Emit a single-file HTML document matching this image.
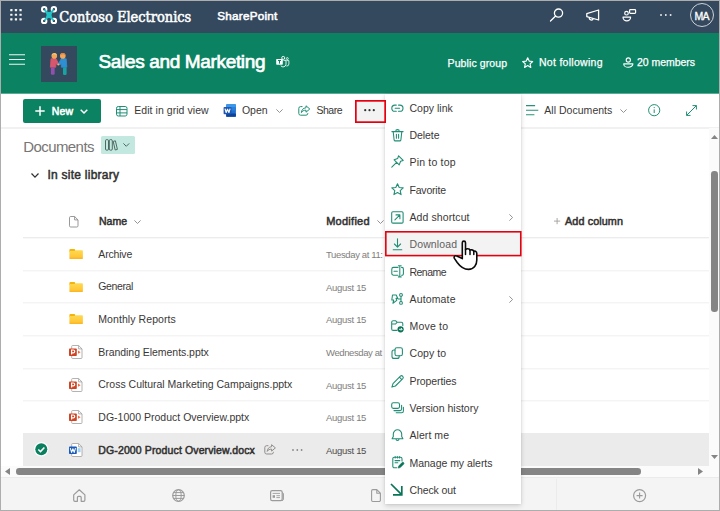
<!DOCTYPE html>
<html lang="en">
<head>
<meta charset="utf-8">
<title>Sales and Marketing - Documents</title>
<style>
*{box-sizing:border-box;margin:0;padding:0}
html,body{width:720px;height:511px;overflow:hidden;background:#fff}
body{font-family:"Liberation Sans",sans-serif;font-size:10.5px;color:#323130;position:relative}
.abs{position:absolute}
.t{position:absolute;white-space:nowrap}
svg{position:absolute;overflow:visible}
</style>
</head>
<body>
<div class="abs" style="left:0px;top:0px;width:720px;height:33px;background:#34495e"></div>
<div class="abs" style="left:0px;top:33px;width:720px;height:61px;background:linear-gradient(#0b8363,#0b8363 60px,#5aab96 60px,#5aab96 61px)"></div>
<div class="abs" style="left:0px;top:94px;width:720px;height:35px;background:#fff;border-bottom:2px solid #f1f1f1"></div>
<div class="abs" style="left:0px;top:477px;width:720px;height:34px;background:#f4f4f4;border-top:1px solid #ebebeb"></div>
<svg style="left:10.4px;top:9px;" width="12" height="12" viewBox="0 0 12 12" fill="none"><rect x="0.2" y="0.1" width="2.3" height="2.2" rx="0.4" fill="#f2f4f6"/><rect x="0.2" y="4.65" width="2.3" height="2.2" rx="0.4" fill="#f2f4f6"/><rect x="0.2" y="9.2" width="2.3" height="2.2" rx="0.4" fill="#f2f4f6"/><rect x="4.8" y="0.1" width="2.3" height="2.2" rx="0.4" fill="#f2f4f6"/><rect x="4.8" y="4.65" width="2.3" height="2.2" rx="0.4" fill="#f2f4f6"/><rect x="4.8" y="9.2" width="2.3" height="2.2" rx="0.4" fill="#f2f4f6"/><rect x="9.4" y="0.1" width="2.3" height="2.2" rx="0.4" fill="#f2f4f6"/><rect x="9.4" y="4.65" width="2.3" height="2.2" rx="0.4" fill="#f2f4f6"/><rect x="9.4" y="9.2" width="2.3" height="2.2" rx="0.4" fill="#f2f4f6"/></svg>
<svg style="left:40.8px;top:6.3px;" width="16" height="18" viewBox="0 0 16 18" fill="none"><g stroke="#fff" stroke-width="2" fill="none"><circle cx="3.2" cy="3.2" r="2.2"/><circle cx="12.9" cy="3.2" r="2.2"/><circle cx="3.2" cy="14.9" r="2.2"/><circle cx="12.9" cy="14.9" r="2.2"/></g>
<path d="M4.1 4.3 L12 13.8 M12 4.3 L4.1 13.8" stroke="#22c3c6" stroke-width="2" stroke-linecap="round"/><path d="M4.7 5 Q8.05 7 11.4 5 Q9.7 9.05 11.4 13.1 Q8.05 11.1 4.7 13.1 Q6.4 9.05 4.7 5 Z" fill="#22c3c6"/></svg>
<span class="t" style="left:59.20px;top:6.98px;font-size:14.5px;line-height:20px;color:#fff;font-family:'DejaVu Serif Condensed','DejaVu Serif','Liberation Serif',serif;font-stretch:condensed;-webkit-text-stroke:0.5px #fff;letter-spacing:-0.03px;">Contoso Electronics</span>
<span class="t" style="left:217.30px;top:8.35px;font-size:11.7px;line-height:16px;letter-spacing:0.234px;color:#fff;-webkit-text-stroke:0.55px #fff;">SharePoint</span>
<svg style="left:549px;top:7px;" width="16" height="16" viewBox="0 0 16 16" fill="none"><circle cx="9.5" cy="6.1" r="4.1" stroke="#fff" stroke-width="1.3"/><path d="M6.6 9 L1.5 14" stroke="#fff" stroke-width="1.3" stroke-linecap="round"/></svg>
<svg style="left:586px;top:9px;" width="14" height="12" viewBox="0 0 14 12" fill="none"><path d="M12.6 1 V11 L0.8 7.6 V4.6 Z" stroke="#fff" stroke-width="1.3" stroke-linejoin="round"/><path d="M3.4 8.4 a2 2 0 0 0 3.9 1.1" stroke="#fff" stroke-width="1.2"/></svg>
<svg style="left:621px;top:8px;" width="16" height="16" viewBox="0 0 16 16" fill="none"><circle cx="5.5" cy="5.2" r="1.8" stroke="#fff" stroke-width="1.2"/><rect x="8.6" y="1.7" width="6" height="3.7" rx="0.8" stroke="#fff" stroke-width="1.2"/><path d="M2 9.1 h7.6 a3.8 3.8 0 0 1 -7.6 0 Z" stroke="#fff" stroke-width="1.2" stroke-linejoin="round"/></svg>
<svg style="left:659.6px;top:14px;" width="12" height="2" viewBox="0 0 12 2" fill="none"><rect x="0.2" y="0.2" width="1.6" height="1.6" fill="#fff"/><rect x="5" y="0.2" width="1.6" height="1.6" fill="#fff"/><rect x="9.8" y="0.2" width="1.6" height="1.6" fill="#fff"/></svg>
<div class="abs" style="left:689.7px;top:3px;width:24.4px;height:24.4px;border:1.2px solid #ccd3d9;border-radius:50%"></div>
<span class="t" style="left:694.60px;top:8.86px;font-size:10.5px;line-height:15px;letter-spacing:-0.751px;color:#fff;-webkit-text-stroke:0.3px #fff;">MA</span>
<svg style="left:9px;top:54px;" width="16" height="11" viewBox="0 0 16 11" fill="none"><path d="M0 0.7 H16 M0 5.5 H16 M0 10.3 H16" stroke="#eef6f3" stroke-width="1.05"/></svg>
<div class="abs" style="left:41px;top:46px;width:36px;height:36px;background:#34495e"></div>
<svg style="left:41px;top:46px;" width="36" height="36" viewBox="0 0 36 36" fill="none"><path d="M10 12.8 h5 l2.6 4.8 -1.2 1.4 -1.6 -1.6 v3.8 h-5.4 Z" fill="#d9566f" stroke="#d9566f" stroke-width="0.8" stroke-linejoin="round"/>
<path d="M25.2 12.8 h-5 l-2.6 4.8 1.2 1.4 1.6 -1.6 v3.8 h5.4 Z" fill="#2f8fd3" stroke="#2f8fd3" stroke-width="0.8" stroke-linejoin="round"/>
<circle cx="17.4" cy="18.6" r="1" fill="#f4b06a"/>
<rect x="9.9" y="21.2" width="3.8" height="7.6" rx="1.2" fill="#9050ab"/>
<rect x="22" y="21.2" width="3.6" height="7.8" rx="1.2" fill="#18a5a2"/>
<circle cx="13.3" cy="9.9" r="2.8" fill="#f3a65a"/><circle cx="21.8" cy="9.9" r="2.8" fill="#f3a65a"/>
<path d="M10.6 9.4 a2.8 2.8 0 0 1 5.2 -0.8 q-2.4 0.2 -3.2 -0.8 q-0.6 1.2 -2 1.6 Z" fill="#f6cf6e"/>
<path d="M19.1 9 a2.8 2.8 0 0 1 5.4 0.2 q-1.6 -0.2 -2.4 -1.2 q-1.4 1 -3 1 Z" fill="#e8833a"/></svg>
<span class="t" style="left:98.50px;top:47.92px;font-size:19px;line-height:27px;letter-spacing:-0.345px;color:#fff;-webkit-text-stroke:0.7px #fff;">Sales and Marketing</span>
<svg style="left:276px;top:55.5px;" width="14" height="12" viewBox="0 0 14 12" fill="none"><rect x="0.2" y="2.9" width="6.6" height="5.8" rx="0.6" fill="#fff"/><path d="M2 4.5 H5 M3.5 4.5 V7.6" stroke="#0b8363" stroke-width="1"/><circle cx="7.2" cy="1.9" r="1.5" stroke="#fff" stroke-width="0.9"/><circle cx="11.3" cy="2.6" r="1" stroke="#fff" stroke-width="0.8"/><path d="M7.4 4.3 H10 V8.4 a2.9 2.9 0 0 1 -5.2 1.3" stroke="#fff" stroke-width="0.9"/><path d="M10.4 4.6 H12.9 V8 a2.2 2.2 0 0 1 -2.6 2" stroke="#fff" stroke-width="0.8"/></svg>
<span class="t" style="left:447.60px;top:55.86px;font-size:10.5px;line-height:15px;letter-spacing:0.093px;color:#fff;-webkit-text-stroke:0.25px #fff;">Public group</span>
<svg style="left:522px;top:56.6px;" width="11.4" height="11.2" viewBox="0 0 11.4 11.2" fill="none"><path d="M5.7 0.8 L7.2 4.1 L10.7 4.5 L8.1 6.9 L8.8 10.4 L5.7 8.6 L2.6 10.4 L3.3 6.9 L0.7 4.5 L4.2 4.1 Z" stroke="#fff" stroke-width="1.15" stroke-linejoin="round"/></svg>
<span class="t" style="left:539.00px;top:55.46px;font-size:10.5px;line-height:15px;letter-spacing:0.282px;color:#fff;-webkit-text-stroke:0.25px #fff;">Not following</span>
<svg style="left:622.5px;top:57px;" width="11" height="11" viewBox="0 0 11 11" fill="none"><circle cx="5.3" cy="3" r="2.1" stroke="#fff" stroke-width="1.1"/><path d="M0.7 6.9 h9.2 a4.6 3.4 0 0 1 -9.2 0 Z" stroke="#fff" stroke-width="1.1" stroke-linejoin="round"/></svg>
<span class="t" style="left:637.00px;top:54.86px;font-size:10.5px;line-height:15px;letter-spacing:-0.040px;color:#fff;-webkit-text-stroke:0.25px #fff;">20 members</span>
<div class="abs" style="left:23px;top:99px;width:78px;height:23.6px;background:#0b8363;border-radius:2px"></div>
<svg style="left:35px;top:106px;" width="10" height="10" viewBox="0 0 10 10" fill="none"><path d="M5 0.3 V9.7 M0.3 5 H9.7" stroke="#fff" stroke-width="1.5"/></svg>
<span class="t" style="left:51.70px;top:103.66px;font-size:10.5px;line-height:15px;letter-spacing:0.247px;color:#fff;-webkit-text-stroke:0.55px #fff;">New</span>
<svg style="left:80px;top:109px;" width="8" height="5" viewBox="0 0 8 5" fill="none"><path d="M0.7 0.7 L4 4 L7.3 0.7" stroke="#fff" stroke-width="1.5"/></svg>
<svg style="left:116.2px;top:105.5px;" width="11.5" height="10.5" viewBox="0 0 11.5 10.5" fill="none"><rect x="0.5" y="0.5" width="10.5" height="9.5" rx="1.8" stroke="#208d74" stroke-width="1"/><path d="M0.5 3.6 H11 M0.5 6.9 H11 M4 0.5 V10" stroke="#208d74" stroke-width="1"/></svg>
<span class="t" style="left:134.20px;top:103.46px;font-size:10.5px;line-height:15px;letter-spacing:0.060px;color:#3a3837;">Edit in grid view</span>
<svg style="left:223px;top:104px;" width="13.5" height="13" viewBox="0 0 13.5 13" fill="none"><rect x="3.2" y="0.2" width="9.7" height="12.6" rx="0.8" fill="#1f6fcc"/><rect x="3.2" y="0.2" width="9.7" height="3.4" rx="0.6" fill="#3a97ea"/><rect x="3.2" y="3.4" width="9.7" height="3.2" fill="#2a7fda"/><rect x="3.2" y="9.4" width="9.7" height="3.4" rx="0.6" fill="#0f429a"/><rect x="0.6" y="3" width="7.9" height="7.2" rx="0.8" fill="#1d57b7"/><path d="M2 4.7 L3.2 8.5 L4.55 5.2 L5.9 8.5 L7.1 4.7" stroke="#fff" stroke-width="1.15" stroke-linejoin="round"/></svg>
<span class="t" style="left:242.00px;top:103.46px;font-size:10.5px;line-height:15px;letter-spacing:-0.062px;color:#3a3837;">Open</span>
<svg style="left:275.5px;top:109px;" width="7" height="4" viewBox="0 0 7 4" fill="none"><path d="M0.4 0.4 L3.5 3.5 L6.6 0.4" stroke="#8a8886" stroke-width="0.9"/></svg>
<svg style="left:298.2px;top:104.8px;" width="12.6" height="11" viewBox="0 0 12.6 11" fill="none"><path d="M4.5 1.6 H2.6 a1.8 1.8 0 0 0 -1.8 1.8 V8.4 a1.8 1.8 0 0 0 1.8 1.8 H8 a1.8 1.8 0 0 0 1.8 -1.8 V8" stroke="#208d74" stroke-width="1" /><path d="M8 0.8 L11.8 4 L8 7.2 V5.2 C5.6 5.2 4.3 6 3.4 7.6 C3.6 5 5 3 8 2.8 Z" stroke="#208d74" stroke-width="1" stroke-linejoin="round"/></svg>
<span class="t" style="left:316.50px;top:103.46px;font-size:10.5px;line-height:15px;letter-spacing:-0.505px;color:#3a3837;">Share</span>
<svg style="left:526px;top:105px;" width="12.5" height="10.5" viewBox="0 0 12.5 10.5" fill="none"><path d="M0 0.6 H9.1 M0 5.3 H12.3 M0 9.7 H8.4" stroke="#2a9078" stroke-width="1.1"/></svg>
<span class="t" style="left:544.30px;top:103.46px;font-size:10.5px;line-height:15px;letter-spacing:0.026px;color:#3a3837;">All Documents</span>
<svg style="left:620px;top:109px;" width="7" height="4" viewBox="0 0 7 4" fill="none"><path d="M0.4 0.4 L3.5 3.5 L6.6 0.4" stroke="#8a8886" stroke-width="0.9"/></svg>
<svg style="left:648.2px;top:103.9px;" width="12.4" height="12.4" viewBox="0 0 12.4 12.4" fill="none"><circle cx="6.2" cy="6.2" r="5.6" stroke="#208d74" stroke-width="1"/><path d="M6.2 5.4 V9" stroke="#208d74" stroke-width="1"/><circle cx="6.2" cy="3.6" r="0.6" fill="#208d74"/></svg>
<svg style="left:686px;top:105px;" width="11" height="11" viewBox="0 0 11 11" fill="none"><path d="M6.5 0.6 H10.4 V4.5 M10.4 0.6 L0.6 10.4 M0.6 6.5 V10.4 H4.5" stroke="#208d74" stroke-width="1"/></svg>
<span class="t" style="left:23.20px;top:136.30px;font-size:15px;line-height:21px;letter-spacing:-0.571px;color:#787674;">Documents</span>
<div class="abs" style="left:101px;top:136px;width:33.6px;height:17.7px;background:#c3e8df;border-radius:1.5px"></div>
<svg style="left:104.8px;top:138.8px;" width="13" height="12" viewBox="0 0 13 12" fill="none"><g stroke="#4d6a62" stroke-width="1"><rect x="0.5" y="0.6" width="3" height="10.6" rx="1.2"/><rect x="4.3" y="0.6" width="3" height="10.6" rx="1.2"/><path d="M8.2 2.4 L10.4 1.8 L12.4 10.4 L10.2 11 Z" stroke-linejoin="round"/></g></svg>
<svg style="left:122.6px;top:143px;" width="6.6" height="3.8" viewBox="0 0 6.6 3.8" fill="none"><path d="M0.4 0.4 L3.3 3.3 L6.2 0.4" stroke="#4d6a62" stroke-width="1"/></svg>
<svg style="left:31px;top:173px;" width="8" height="4.8" viewBox="0 0 8 4.8" fill="none"><path d="M0.5 0.5 L4 4.1 L7.5 0.5" stroke="#323130" stroke-width="1.25"/></svg>
<span class="t" style="left:47.50px;top:166.64px;font-size:12px;line-height:17px;letter-spacing:0.248px;color:#323130;-webkit-text-stroke:0.5px #323130;">In site library</span>
<svg style="left:68.5px;top:216px;" width="9.5" height="11.5" viewBox="0 0 9.5 11.5" fill="none"><path d="M1.7 0.5 H5.6 L9 3.9 V9.8 a1.2 1.2 0 0 1 -1.2 1.2 H1.7 A1.2 1.2 0 0 1 0.5 9.8 V1.7 A1.2 1.2 0 0 1 1.7 0.5 Z M5.6 0.5 V3.9 H9" stroke="#8f8d8b" stroke-width="0.9" stroke-linejoin="round"/></svg>
<span class="t" style="left:99.00px;top:214.26px;font-size:10.5px;line-height:15px;letter-spacing:-0.003px;color:#323130;-webkit-text-stroke:0.5px #323130;">Name</span>
<svg style="left:134.4px;top:219.8px;" width="7" height="4" viewBox="0 0 7 4" fill="none"><path d="M0.4 0.4 L3.5 3.5 L6.6 0.4" stroke="#8a8886" stroke-width="0.9"/></svg>
<span class="t" style="left:326.20px;top:214.09px;font-size:11px;line-height:15px;letter-spacing:0.260px;color:#323130;-webkit-text-stroke:0.5px #323130;">Modified</span>
<svg style="left:377px;top:219.5px;" width="7" height="4" viewBox="0 0 7 4" fill="none"><path d="M0.4 0.4 L3.5 3.5 L6.6 0.4" stroke="#8a8886" stroke-width="0.9"/></svg>
<svg style="left:553.7px;top:218.3px;" width="6.2" height="6.2" viewBox="0 0 6.2 6.2" fill="none"><path d="M3.1 0 V6.2 M0 3.1 H6.2" stroke="#a19f9d" stroke-width="0.9"/></svg>
<span class="t" style="left:565.00px;top:214.16px;font-size:10.8px;line-height:15px;letter-spacing:0.107px;color:#323130;-webkit-text-stroke:0.5px #323130;">Add column</span>
<div class="abs" style="left:23px;top:237px;width:685.6px;height:2px;background:linear-gradient(#ececec 50%,#f8f8f8 50%)"></div>
<div class="abs" style="left:23px;top:433px;width:685.6px;height:32.6px;background:#ebebeb"></div>
<div class="abs" style="left:23px;top:270px;width:685.6px;height:2px;background:linear-gradient(#f4f4f4 50%,#fafafa 50%)"></div>
<svg style="left:68.6px;top:248.9px;" width="14.2" height="10.2" viewBox="0 0 14.2 10.2" fill="none"><defs><linearGradient id="fg" x1="0" y1="0" x2="0" y2="1"><stop offset="0" stop-color="#ffd94f"/><stop offset="0.7" stop-color="#ffc83a"/><stop offset="1" stop-color="#fdb21c"/></linearGradient></defs><path d="M0.4 1.1 a1 1 0 0 1 1 -1 H5.2 a1 1 0 0 1 1 1 V3 H0.4 Z" fill="#f3b50c"/><path d="M0.4 1.9 H5.6 L6.4 1.3 H13 a0.9 0.9 0 0 1 0.9 0.9 V9.2 a0.9 0.9 0 0 1 -0.9 0.9 H1.3 a0.9 0.9 0 0 1 -0.9 -0.9 Z" fill="url(#fg)"/></svg>
<span class="t" style="left:98.30px;top:246.56px;font-size:10.5px;line-height:15px;letter-spacing:-0.169px;color:#3a3837;">Archive</span>
<span class="t" style="left:326.00px;top:248.01px;font-size:9.5px;line-height:13px;letter-spacing:-0.368px;color:#807e7c;">Tuesday at 11:</span>
<div class="abs" style="left:23px;top:302px;width:685.6px;height:2px;background:linear-gradient(#f4f4f4 50%,#fafafa 50%)"></div>
<svg style="left:68.6px;top:281.5px;" width="14.2" height="10.2" viewBox="0 0 14.2 10.2" fill="none"><defs><linearGradient id="fg" x1="0" y1="0" x2="0" y2="1"><stop offset="0" stop-color="#ffd94f"/><stop offset="0.7" stop-color="#ffc83a"/><stop offset="1" stop-color="#fdb21c"/></linearGradient></defs><path d="M0.4 1.1 a1 1 0 0 1 1 -1 H5.2 a1 1 0 0 1 1 1 V3 H0.4 Z" fill="#f3b50c"/><path d="M0.4 1.9 H5.6 L6.4 1.3 H13 a0.9 0.9 0 0 1 0.9 0.9 V9.2 a0.9 0.9 0 0 1 -0.9 0.9 H1.3 a0.9 0.9 0 0 1 -0.9 -0.9 Z" fill="url(#fg)"/></svg>
<span class="t" style="left:98.30px;top:279.16px;font-size:10.5px;line-height:15px;letter-spacing:-0.393px;color:#3a3837;">General</span>
<span class="t" style="left:326.00px;top:280.61px;font-size:9.5px;line-height:13px;letter-spacing:-0.298px;color:#807e7c;">August 15</span>
<div class="abs" style="left:23px;top:335px;width:685.6px;height:2px;background:linear-gradient(#f4f4f4 50%,#fafafa 50%)"></div>
<svg style="left:68.6px;top:314.2px;" width="14.2" height="10.2" viewBox="0 0 14.2 10.2" fill="none"><defs><linearGradient id="fg" x1="0" y1="0" x2="0" y2="1"><stop offset="0" stop-color="#ffd94f"/><stop offset="0.7" stop-color="#ffc83a"/><stop offset="1" stop-color="#fdb21c"/></linearGradient></defs><path d="M0.4 1.1 a1 1 0 0 1 1 -1 H5.2 a1 1 0 0 1 1 1 V3 H0.4 Z" fill="#f3b50c"/><path d="M0.4 1.9 H5.6 L6.4 1.3 H13 a0.9 0.9 0 0 1 0.9 0.9 V9.2 a0.9 0.9 0 0 1 -0.9 0.9 H1.3 a0.9 0.9 0 0 1 -0.9 -0.9 Z" fill="url(#fg)"/></svg>
<span class="t" style="left:98.30px;top:311.86px;font-size:10.5px;line-height:15px;letter-spacing:0.075px;color:#3a3837;">Monthly Reports</span>
<span class="t" style="left:326.00px;top:313.31px;font-size:9.5px;line-height:13px;letter-spacing:-0.298px;color:#807e7c;">August 15</span>
<div class="abs" style="left:23px;top:368px;width:685.6px;height:2px;background:linear-gradient(#f4f4f4 50%,#fafafa 50%)"></div>
<svg style="left:68.5px;top:344.8px;" width="14" height="14" viewBox="0 0 14 14" fill="none"><path d="M3.6 0.5 H9.6 L13 3.9 V12.6 a0.9 0.9 0 0 1 -0.9 0.9 H3.6 a0.9 0.9 0 0 1 -0.9 -0.9 V1.4 a0.9 0.9 0 0 1 0.9 -0.9 Z" fill="#fff" stroke="#a19f9d" stroke-width="0.8"/><path d="M9.6 0.5 V3.9 H13" stroke="#a19f9d" stroke-width="0.8" fill="none"/><rect x="0" y="3.4" width="7.8" height="7.6" rx="0.8" fill="#d04423"/><path d="M2.6 9.6 V5 H4.3 a1.4 1.4 0 0 1 0 2.8 H2.6" stroke="#fff" stroke-width="1.2" fill="none"/><path d="M9 5.6 L11.6 7.2 L9 8.8 Z" fill="#ed6c47"/></svg>
<span class="t" style="left:98.30px;top:344.56px;font-size:10.5px;line-height:15px;letter-spacing:-0.047px;color:#3a3837;">Branding Elements.pptx</span>
<span class="t" style="left:326.00px;top:346.01px;font-size:9.5px;line-height:13px;letter-spacing:-0.396px;color:#807e7c;">Wednesday at</span>
<div class="abs" style="left:23px;top:400px;width:685.6px;height:2px;background:linear-gradient(#f4f4f4 50%,#fafafa 50%)"></div>
<svg style="left:68.5px;top:377.5px;" width="14" height="14" viewBox="0 0 14 14" fill="none"><path d="M3.6 0.5 H9.6 L13 3.9 V12.6 a0.9 0.9 0 0 1 -0.9 0.9 H3.6 a0.9 0.9 0 0 1 -0.9 -0.9 V1.4 a0.9 0.9 0 0 1 0.9 -0.9 Z" fill="#fff" stroke="#a19f9d" stroke-width="0.8"/><path d="M9.6 0.5 V3.9 H13" stroke="#a19f9d" stroke-width="0.8" fill="none"/><rect x="0" y="3.4" width="7.8" height="7.6" rx="0.8" fill="#d04423"/><path d="M2.6 9.6 V5 H4.3 a1.4 1.4 0 0 1 0 2.8 H2.6" stroke="#fff" stroke-width="1.2" fill="none"/><path d="M9 5.6 L11.6 7.2 L9 8.8 Z" fill="#ed6c47"/></svg>
<span class="t" style="left:98.30px;top:377.26px;font-size:10.5px;line-height:15px;letter-spacing:-0.009px;color:#3a3837;">Cross Cultural Marketing Campaigns.pptx</span>
<span class="t" style="left:326.00px;top:378.71px;font-size:9.5px;line-height:13px;letter-spacing:-0.298px;color:#807e7c;">August 15</span>
<svg style="left:68.5px;top:410.2px;" width="14" height="14" viewBox="0 0 14 14" fill="none"><path d="M3.6 0.5 H9.6 L13 3.9 V12.6 a0.9 0.9 0 0 1 -0.9 0.9 H3.6 a0.9 0.9 0 0 1 -0.9 -0.9 V1.4 a0.9 0.9 0 0 1 0.9 -0.9 Z" fill="#fff" stroke="#a19f9d" stroke-width="0.8"/><path d="M9.6 0.5 V3.9 H13" stroke="#a19f9d" stroke-width="0.8" fill="none"/><rect x="0" y="3.4" width="7.8" height="7.6" rx="0.8" fill="#d04423"/><path d="M2.6 9.6 V5 H4.3 a1.4 1.4 0 0 1 0 2.8 H2.6" stroke="#fff" stroke-width="1.2" fill="none"/><path d="M9 5.6 L11.6 7.2 L9 8.8 Z" fill="#ed6c47"/></svg>
<span class="t" style="left:98.30px;top:409.96px;font-size:10.5px;line-height:15px;letter-spacing:0.015px;color:#3a3837;">DG-1000 Product Overview.pptx</span>
<span class="t" style="left:326.00px;top:411.41px;font-size:9.5px;line-height:13px;letter-spacing:-0.298px;color:#807e7c;">August 15</span>
<svg style="left:68.5px;top:442.8px;" width="14" height="14" viewBox="0 0 14 14" fill="none"><path d="M3.6 0.5 H9.6 L13 3.9 V12.6 a0.9 0.9 0 0 1 -0.9 0.9 H3.6 a0.9 0.9 0 0 1 -0.9 -0.9 V1.4 a0.9 0.9 0 0 1 0.9 -0.9 Z" fill="#fff" stroke="#a19f9d" stroke-width="0.8"/><path d="M9.6 0.5 V3.9 H13" stroke="#a19f9d" stroke-width="0.8" fill="none"/><rect x="0" y="3.4" width="7.8" height="7.6" rx="0.8" fill="#185abd"/><path d="M1.3 5.2 L2.6 9.4 L3.9 5.8 L5.2 9.4 L6.5 5.2" stroke="#fff" stroke-width="1.1" fill="none" stroke-linejoin="round"/><rect x="8.8" y="5.2" width="2.8" height="4" fill="#9fd0f5"/></svg>
<span class="t" style="left:98.30px;top:442.56px;font-size:10.5px;line-height:15px;letter-spacing:0.128px;color:#323130;-webkit-text-stroke:0.5px #323130;">DG-2000 Product Overview.docx</span>
<span class="t" style="left:326.00px;top:444.01px;font-size:9.5px;line-height:13px;letter-spacing:-0.298px;color:#4e4c4a;">August 15</span>
<svg style="left:33.8px;top:442.1px;" width="14.6" height="14.6" viewBox="0 0 14.6 14.6" fill="none"><circle cx="7.3" cy="7.3" r="7.2" fill="#fff"/><circle cx="7.3" cy="7.3" r="6" fill="#0b8060"/><path d="M4.3 7.5 L6.5 9.6 L10.4 5.4" stroke="#fff" stroke-width="1.5" fill="none"/></svg>
<svg style="left:264px;top:444.2px;" width="12" height="10.6" viewBox="0 0 12 10.6" fill="none"><path d="M4.4 1.7 H2.6 a1.8 1.8 0 0 0 -1.8 1.8 V8.2 a1.8 1.8 0 0 0 1.8 1.8 H7.6 a1.8 1.8 0 0 0 1.8 -1.8 V7.8" stroke="#8f8d8b" stroke-width="1" /><path d="M7.6 0.7 L11.4 3.9 L7.6 7.1 V5.1 C5.4 5.1 4.1 5.9 3.2 7.4 C3.4 4.9 4.8 2.9 7.6 2.7 Z" stroke="#8f8d8b" stroke-width="1" stroke-linejoin="round"/></svg>
<svg style="left:292px;top:448.7px;" width="11" height="2" viewBox="0 0 11 2" fill="none"><circle cx="1" cy="1" r="0.9" fill="#8a8886"/><circle cx="5.3" cy="1" r="0.9" fill="#8a8886"/><circle cx="9.6" cy="1" r="0.9" fill="#8a8886"/></svg>
<div class="abs" style="left:708.6px;top:128px;width:11.4px;height:338px;background:#fbfbfb"></div>
<svg style="left:711px;top:135px;" width="7" height="4" viewBox="0 0 7 4" fill="none"><path d="M3.5 0 L7 4 H0 Z" fill="#858585"/></svg>
<svg style="left:711px;top:454.8px;" width="7" height="4" viewBox="0 0 7 4" fill="none"><path d="M3.5 4 L7 0 H0 Z" fill="#858585"/></svg>
<div class="abs" style="left:711.2px;top:171.2px;width:6.4px;height:140.5px;background:#858585;border-radius:3.2px"></div>
<div class="abs" style="left:0px;top:465.6px;width:720px;height:11.6px;background:#fbfbfb"></div>
<svg style="left:4.6px;top:468px;" width="5" height="7" viewBox="0 0 5 7" fill="none"><path d="M0 3.5 L5 0 V7 Z" fill="#858585"/></svg>
<svg style="left:697.5px;top:468px;" width="5" height="7" viewBox="0 0 5 7" fill="none"><path d="M5 3.5 L0 0 V7 Z" fill="#858585"/></svg>
<div class="abs" style="left:16px;top:468px;width:625px;height:6.5px;background:#858585;border-radius:3.25px"></div>
<svg style="left:73.3px;top:488.9px;" width="12.6" height="13" viewBox="0 0 12.6 13" fill="none"><path d="M0.7 5.9 L6.3 0.8 L11.9 5.9 V11 a1.3 1.3 0 0 1 -1.3 1.3 H8.2 V8.4 a1 1 0 0 0 -1 -1 H5.4 a1 1 0 0 0 -1 1 V12.3 H2 a1.3 1.3 0 0 1 -1.3 -1.3 Z" stroke="#9b9b9b" stroke-width="1.2" stroke-linejoin="round"/></svg>
<svg style="left:171.8px;top:488.9px;" width="13" height="13" viewBox="0 0 13 13" fill="none"><circle cx="6.5" cy="6.5" r="5.8" stroke="#9b9b9b" stroke-width="1.2"/><ellipse cx="6.5" cy="6.5" rx="2.7" ry="5.8" stroke="#9b9b9b" stroke-width="1"/><path d="M0.7 6.5 H12.3 M1.5 3.6 H11.5 M1.5 9.4 H11.5" stroke="#9b9b9b" stroke-width="1"/></svg>
<svg style="left:270.3px;top:489.8px;" width="14" height="11.4" viewBox="0 0 14 11.4" fill="none"><rect x="0.6" y="0.6" width="11.6" height="10" rx="1.6" stroke="#9b9b9b" stroke-width="1.2"/><path d="M12.2 2.8 H12.4 a1 1 0 0 1 1 1 V9 a1.6 1.6 0 0 1 -1.6 1.6" stroke="#9b9b9b" stroke-width="1"/><rect x="2.6" y="5.2" width="2.4" height="2.6" fill="#9b9b9b"/><path d="M2.6 3.4 H10 M6.4 5.7 H10 M6.4 7.6 H10" stroke="#9b9b9b" stroke-width="0.9"/></svg>
<svg style="left:370.9px;top:489.2px;" width="10" height="13.2" viewBox="0 0 10 13.2" fill="none"><path d="M1.8 0.6 H5.8 L9.4 4.2 V11.2 a1.3 1.3 0 0 1 -1.3 1.3 H1.8 A1.3 1.3 0 0 1 0.6 11.2 V1.9 A1.3 1.3 0 0 1 1.8 0.6 Z M5.8 0.6 V4.2 H9.4" stroke="#9b9b9b" stroke-width="1.1" stroke-linejoin="round"/></svg>
<div class="abs" style="left:556px;top:479px;width:1px;height:31px;background:#ebebeb"></div>
<svg style="left:632.6px;top:488.7px;" width="13.2" height="13.2" viewBox="0 0 13.2 13.2" fill="none"><circle cx="6.6" cy="6.6" r="6" stroke="#9b9b9b" stroke-width="1.2"/><path d="M6.6 3.6 V9.6 M3.6 6.6 H9.6" stroke="#9b9b9b" stroke-width="1.1"/></svg>
<div class="abs" style="left:385.4px;top:93.5px;width:136px;height:410.5px;background:#fff;box-shadow:0 2px 5px rgba(0,0,0,0.16),0 0 2px rgba(0,0,0,0.10)"></div>
<svg style="left:385.2px;top:230.7px;" width="136.6" height="25.4" viewBox="0 0 136.6 25.4" fill="none"><rect x="0.8" y="0.8" width="135" height="23.8" fill="#f3f3f3" stroke="#e6000f" stroke-width="1.6"/></svg>
<svg style="left:391px;top:101.5px;" width="13" height="13" viewBox="0 0 13 13" fill="none"><path d="M5.3 3.1 H3.9 a3.1 3.1 0 0 0 0 6.2 H5.3 M7.5 3.1 H8.9 a3.1 3.1 0 0 1 0 6.2 H7.5 M4.2 6.2 H8.6" stroke="#208d74" stroke-width="1.08" stroke-linejoin="round" stroke-linecap="round"/></svg>
<span class="t" style="left:409.50px;top:100.76px;font-size:10.5px;line-height:15px;letter-spacing:0.014px;color:#3a3837;">Copy link</span>
<svg style="left:391px;top:129px;" width="13" height="13" viewBox="0 0 13 13" fill="none"><path d="M0.9 2.6 H12.1 M4.7 2.4 a1.8 1.8 0 0 1 3.6 0 M2.2 2.8 L3.1 10.8 a1.3 1.3 0 0 0 1.3 1.1 H8.6 a1.3 1.3 0 0 0 1.3 -1.1 L10.8 2.8 M5.4 5.2 V9.2 M7.6 5.2 V9.2" stroke="#208d74" stroke-width="1.08" stroke-linejoin="round" stroke-linecap="round"/></svg>
<span class="t" style="left:409.50px;top:128.06px;font-size:10.5px;line-height:15px;letter-spacing:-0.070px;color:#3a3837;">Delete</span>
<svg style="left:390.8px;top:155.4px;" width="13" height="13" viewBox="0 0 13 13" fill="none"><path d="M7.6 0.8 L12.2 5.4 L9.6 6.3 L8.2 9.9 L3.1 4.8 L6.7 3.4 Z M5.6 7.4 L0.8 12.2" stroke="#208d74" stroke-width="1.08" stroke-linejoin="round" stroke-linecap="round"/></svg>
<span class="t" style="left:409.50px;top:155.36px;font-size:10.5px;line-height:15px;letter-spacing:0.182px;color:#3a3837;">Pin to top</span>
<svg style="left:390.8px;top:183.4px;" width="13" height="13" viewBox="0 0 13 13" fill="none"><path d="M6.5 0.8 L8.2 4.5 L12.2 4.9 L9.2 7.6 L10.1 11.6 L6.5 9.5 L2.9 11.6 L3.8 7.6 L0.8 4.9 L4.8 4.5 Z" stroke="#208d74" stroke-width="1.08" stroke-linejoin="round" stroke-linecap="round"/></svg>
<span class="t" style="left:409.50px;top:182.66px;font-size:10.5px;line-height:15px;letter-spacing:-0.204px;color:#3a3837;">Favorite</span>
<svg style="left:391px;top:210.6px;" width="13" height="13" viewBox="0 0 13 13" fill="none"><rect x="0.7" y="0.7" width="11.4" height="11.4" rx="1.2" stroke="#208d74" stroke-width="1.08" stroke-linejoin="round" stroke-linecap="round"/><path d="M5 3.9 H8.9 V7.8 M8.9 3.9 L3.9 8.9" stroke="#208d74" stroke-width="1.08" stroke-linejoin="round" stroke-linecap="round"/></svg>
<span class="t" style="left:409.50px;top:209.96px;font-size:10.5px;line-height:15px;letter-spacing:0.095px;color:#3a3837;">Add shortcut</span>
<svg style="left:391px;top:238px;" width="13" height="13" viewBox="0 0 13 13" fill="none"><path d="M6.5 0.8 V9 M3.4 6 L6.5 9.2 L9.6 6 M2.2 11.8 H10.8" stroke="#208d74" stroke-width="1.08" stroke-linejoin="round" stroke-linecap="round"/></svg>
<span class="t" style="left:409.50px;top:237.26px;font-size:10.5px;line-height:15px;letter-spacing:0.115px;color:#62605e;">Download</span>
<svg style="left:391px;top:265.4px;" width="13" height="13" viewBox="0 0 13 13" fill="none"><path d="M7 2.4 H2.6 a1.8 1.8 0 0 0 -1.8 1.8 V8.4 a1.8 1.8 0 0 0 1.8 1.8 H7 M10.6 2.4 H10.9 a1.5 1.5 0 0 1 1.5 1.5 V8.7 a1.5 1.5 0 0 1 -1.5 1.5 H10.6 M8.8 0.7 V11.9 M7.4 0.7 H10.2 M7.4 11.9 H10.2 M3 6.3 H6.3" stroke="#208d74" stroke-width="1.08" stroke-linejoin="round" stroke-linecap="round"/></svg>
<span class="t" style="left:409.50px;top:264.56px;font-size:10.5px;line-height:15px;letter-spacing:-0.538px;color:#3a3837;">Rename</span>
<svg style="left:391px;top:292.7px;" width="13" height="13" viewBox="0 0 13 13" fill="none"><path d="M1.5 2 H5.2 L6.8 5.4 H5 L5.8 7.4 L1.9 10.3 L2.7 7 H0.8 Z" stroke="#208d74" stroke-width="1.08" stroke-linejoin="round" stroke-linecap="round"/><circle cx="10" cy="1.9" r="1.4" stroke="#208d74" stroke-width="1.08" stroke-linejoin="round" stroke-linecap="round"/><circle cx="10" cy="9.9" r="1.4" stroke="#208d74" stroke-width="1.08" stroke-linejoin="round" stroke-linecap="round"/><path d="M10 3.3 V8.5 M7.2 6 H10" stroke="#208d74" stroke-width="1.08" stroke-linejoin="round" stroke-linecap="round"/></svg>
<span class="t" style="left:409.50px;top:291.86px;font-size:10.5px;line-height:15px;letter-spacing:0.151px;color:#3a3837;">Automate</span>
<svg style="left:391px;top:320px;" width="13" height="13" viewBox="0 0 13 13" fill="none"><path d="M6 10.4 H2.2 a1.5 1.5 0 0 1 -1.5 -1.5 V2.2 a1.5 1.5 0 0 1 1.5 -1.5 H4.5 L6 2.2 H10.3 a1.5 1.5 0 0 1 1.5 1.5 V5.5 M0.7 4 H4.6 L6 2.4" stroke="#208d74" stroke-width="1.08" stroke-linejoin="round" stroke-linecap="round"/><circle cx="9.6" cy="9.3" r="3.1" fill="#0a7457"/><path d="M8 9.3 H11 M9.9 8 L11.2 9.3 L9.9 10.6" stroke="#fff" stroke-width="0.9" fill="none"/></svg>
<span class="t" style="left:409.50px;top:319.16px;font-size:10.5px;line-height:15px;letter-spacing:0.192px;color:#3a3837;">Move to</span>
<svg style="left:391px;top:346.8px;" width="13" height="13" viewBox="0 0 13 13" fill="none"><rect x="4" y="0.8" width="7.4" height="8" rx="1.8" stroke="#208d74" stroke-width="1.08" stroke-linejoin="round" stroke-linecap="round"/><path d="M4 3 H3 a2 2 0 0 0 -2 2 V9.4 a2 2 0 0 0 2 2 H6.2 a2 2 0 0 0 2 -2 V8.8" stroke="#208d74" stroke-width="1.08" stroke-linejoin="round" stroke-linecap="round"/></svg>
<span class="t" style="left:409.50px;top:346.46px;font-size:10.5px;line-height:15px;letter-spacing:0.052px;color:#3a3837;">Copy to</span>
<svg style="left:390.8px;top:374.5px;" width="13" height="13" viewBox="0 0 13 13" fill="none"><path d="M9.4 1.2 a1.7 1.7 0 0 1 2.4 2.4 L4.4 11 L0.9 12.1 L2 8.6 Z M8.4 2.2 L10.8 4.6" stroke="#208d74" stroke-width="1.08" stroke-linejoin="round" stroke-linecap="round"/></svg>
<span class="t" style="left:409.50px;top:373.76px;font-size:10.5px;line-height:15px;letter-spacing:-0.095px;color:#3a3837;">Properties</span>
<svg style="left:391px;top:401.9px;" width="13" height="13" viewBox="0 0 13 13" fill="none"><rect x="0.7" y="0.8" width="7.8" height="5.6" rx="1.6" stroke="#208d74" stroke-width="1.08" stroke-linejoin="round" stroke-linecap="round"/><path d="M3 8.6 H9 a1.6 1.6 0 0 0 1.6 -1.6 V3.2 M5.2 10.8 H10.6 a1.8 1.8 0 0 0 1.8 -1.8 V5.4" stroke="#208d74" stroke-width="1.08" stroke-linejoin="round" stroke-linecap="round"/></svg>
<span class="t" style="left:409.50px;top:401.06px;font-size:10.5px;line-height:15px;letter-spacing:0.002px;color:#3a3837;">Version history</span>
<svg style="left:390.8px;top:428.7px;" width="13" height="13" viewBox="0 0 13 13" fill="none"><path d="M6.5 0.8 a4.2 4.2 0 0 1 4.2 4.2 V7.6 L11.9 9.8 H1.1 L2.3 7.6 V5 a4.2 4.2 0 0 1 4.2 -4.2 Z M5 10 a1.5 1.5 0 0 0 3 0" stroke="#208d74" stroke-width="1.08" stroke-linejoin="round" stroke-linecap="round"/></svg>
<span class="t" style="left:409.50px;top:428.36px;font-size:10.5px;line-height:15px;letter-spacing:0.058px;color:#3a3837;">Alert me</span>
<svg style="left:391.6px;top:456px;" width="13" height="13" viewBox="0 0 13 13" fill="none"><path d="M10 5 V2.8 a1.5 1.5 0 0 0 -1.5 -1.5 H2.3 a1.5 1.5 0 0 0 -1.5 1.5 V10.2 a1.5 1.5 0 0 0 1.5 1.5 H4.8 M3.2 0.6 V2 M5.4 0.6 V2 M7.6 0.6 V2 M3 4.6 H7.8 M3 6.8 H5.8" stroke="#208d74" stroke-width="1.08" stroke-linejoin="round" stroke-linecap="round"/><path d="M10 6.6 a1.1 1.1 0 0 1 1.6 1.6 L8.2 11.6 L6.2 12.1 L6.7 10.1 Z" fill="#0a7457" stroke="#0a7457" stroke-width="0.6"/></svg>
<span class="t" style="left:409.50px;top:455.66px;font-size:10.5px;line-height:15px;letter-spacing:-0.030px;color:#3a3837;">Manage my alerts</span>
<svg style="left:390.4px;top:482.9px;" width="13" height="13" viewBox="0 0 13 13" fill="none"><path d="M1 1 L11.4 11.4 M11.8 3 V11.8 H3" stroke="#0a7457" stroke-width="1.7" fill="none"/></svg>
<span class="t" style="left:409.50px;top:482.96px;font-size:10.5px;line-height:15px;letter-spacing:-0.097px;color:#3a3837;">Check out</span>
<svg style="left:509px;top:213.9px;" width="4" height="7" viewBox="0 0 4 7" fill="none"><path d="M0.4 0.4 L3.6 3.5 L0.4 6.6" stroke="#8a8886" stroke-width="0.9"/></svg>
<svg style="left:509px;top:295.8px;" width="4" height="7" viewBox="0 0 4 7" fill="none"><path d="M0.4 0.4 L3.6 3.5 L0.4 6.6" stroke="#8a8886" stroke-width="0.9"/></svg>
<svg style="left:354.8px;top:99.8px;" width="31" height="23" viewBox="0 0 31 23" fill="none"><rect x="0.85" y="0.85" width="29.3" height="21.3" fill="#f3f3f3" stroke="#e6000f" stroke-width="1.7"/></svg>
<svg style="left:364.4px;top:109.1px;" width="11" height="2.4" viewBox="0 0 11 2.4" fill="none"><circle cx="1.2" cy="1.2" r="1.1" fill="#323130"/><circle cx="5.5" cy="1.2" r="1.1" fill="#323130"/><circle cx="9.8" cy="1.2" r="1.1" fill="#323130"/></svg>
<svg style="left:453px;top:240px;" width="25" height="31" viewBox="0 0 25 31" fill="none"><path d="M9.3 18.6 L9.3 2.7 A1.6 1.6 0 0 1 12.5 2.7 L12.5 9.8 C12.9 8.4 16.7 8.4 17 10.3 C17.4 9.4 20.5 9.7 20.8 11.5 C21.3 10.7 23.8 11.1 23.8 13.6 L23.8 20 C23.8 25 21 29.4 15.5 29.4 C10.5 29.4 7.5 27 4.2 22.5 L1.4 18.4 C0.4 16.6 2.2 15.2 3.8 16.1 Z" fill="#fff" stroke="#0a0a0a" stroke-width="1.6" stroke-linejoin="round"/>
<path d="M12.5 9.8 V14.4 M17 10.3 V14.4 M20.8 11.5 V14.6" stroke="#0a0a0a" stroke-width="1.5" stroke-linecap="round"/></svg>
<div class="abs" style="left:0px;top:0px;width:720px;height:511px;border:1px solid #adadad;pointer-events:none"></div>
</body>
</html>
